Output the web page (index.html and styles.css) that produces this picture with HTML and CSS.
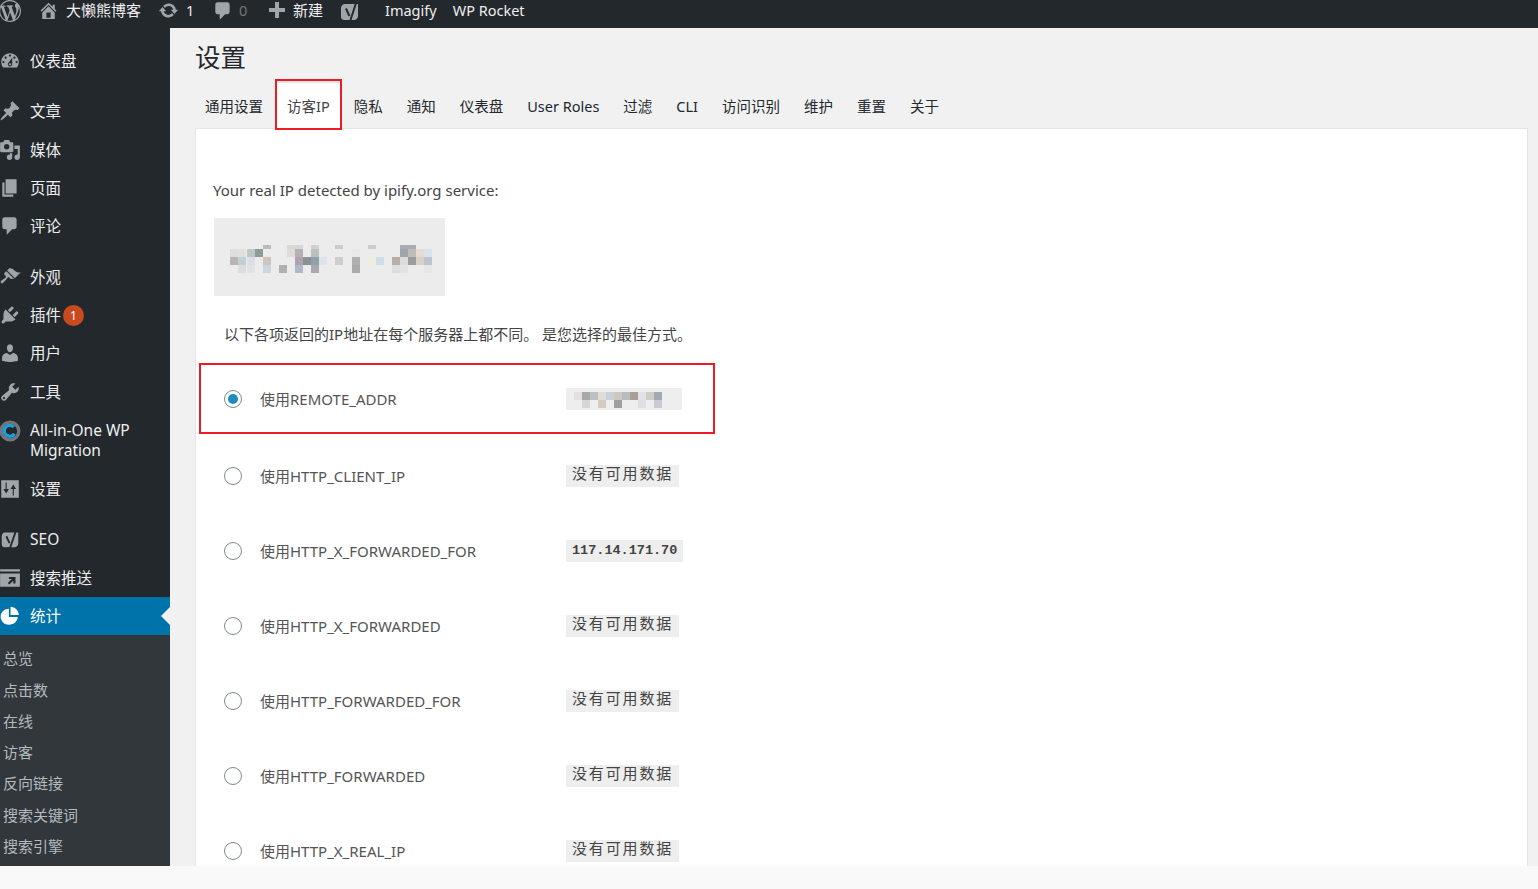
FILE: index.html
```html
<!DOCTYPE html>
<html lang="zh-CN">
<head>
<meta charset="utf-8">
<title>设置</title>
<link rel="stylesheet" href="styles.css">
</head>
<body>
<header class="adminbar">
  <svg class="bar-wp" viewBox="0 0 20 20"><path d="M20 10c0-5.51-4.49-10-10-10C4.48 0 0 4.49 0 10c0 5.52 4.48 10 10 10 5.51 0 10-4.48 10-10zM7.78 15.37L4.37 6.22c.55-.02 1.17-.08 1.17-.08.5-.06.44-1.13-.06-1.11 0 0-1.45.11-2.37.11-.18 0-.37 0-.58-.01C4.12 2.69 6.87 1.11 10 1.11c2.33 0 4.45.87 6.05 2.34-.68-.11-1.65.39-1.65 1.58 0 .74.45 1.36.9 2.1.35.61.55 1.36.55 2.46 0 1.49-1.4 5-1.4 5l-3.03-8.37c.54-.02.82-.17.82-.17.5-.05.44-1.25-.06-1.22 0 0-1.44.12-2.38.12-.87 0-2.33-.12-2.33-.12-.5-.03-.56 1.2-.06 1.22l.92.08 1.26 3.41zM17.41 10c.24-.64.74-1.87.43-4.25.7 1.29 1.05 2.71 1.05 4.25 0 3.29-1.73 6.24-4.4 7.78.97-2.59 1.94-5.2 2.92-7.78zM6.1 18.09C3.12 16.65 1.11 13.53 1.11 10c0-1.3.23-2.48.72-3.59C3.25 10.3 4.67 14.2 6.1 18.09zm4.03-6.63l2.58 6.98c-.86.29-1.76.45-2.71.45-.79 0-1.57-.11-2.29-.33.81-2.38 1.62-4.74 2.42-7.1z"/></svg>
  <svg class="bar-home" viewBox="0 0 20 20"><path d="M16 8.5l1.53 1.53-1.06 1.06L10 4.62l-6.47 6.47-1.06-1.06L10 2.5l4 4v-2h2v4zm-6-2.46l6 5.99V18H4v-5.97zM12 17v-5H8v5h4z"/></svg>
  <span class="bar-site">大懒熊博客</span>
  <svg class="bar-update" viewBox="0 0 20 20"><path d="M10.2 3.28c3.53 0 6.43 2.61 6.92 6h2.08l-3.5 4-3.5-4h2.32c-.45-1.97-2.21-3.45-4.32-3.45-1.45 0-2.73.71-3.54 1.78L4.95 5.66C6.23 4.2 8.11 3.28 10.2 3.28zm-.4 13.44c-3.52 0-6.43-2.61-6.92-6H.8l3.5-4c1.17 1.33 2.33 2.67 3.5 4H5.48c.45 1.97 2.21 3.45 4.32 3.45 1.45 0 2.73-.71 3.54-1.78l1.71 1.95c-1.28 1.46-3.15 2.38-5.25 2.38z"/></svg>
  <span class="bar-count">1</span>
  <svg class="bar-comment" viewBox="0 0 20 20"><path d="M5 2h9c1.1 0 2 .9 2 2v7c0 1.1-.9 2-2 2h-2l-5 5v-5H5c-1.1 0-2-.9-2-2V4c0-1.1.9-2 2-2z"/></svg>
  <span class="bar-zero">0</span>
  <svg class="bar-plus" viewBox="0 0 18 18"><path d="M7 1h4v6h6v4h-6v6H7v-6H1V7h6z"/></svg>
  <span class="bar-new">新建</span>
  <svg class="bar-yoast" viewBox="0 0 20 24"><path d="M4 4h13v12c0 2.2-1.8 4-4 4H3c-1.6 0-3-1.4-3-3V8c0-2.2 1.8-4 4-4z"/><path class="yoast-cut" d="M5 8.5l3.4 7.5M15.5 1.5L9 21.5h-3"/></svg>
  <span class="bar-imagify">Imagify</span>
  <span class="bar-rocket">WP Rocket</span>
</header>

<div class="layout">
  <nav class="sidebar">
    <a class="item"><svg class="ico" viewBox="0 0 20 20"><path d="M3.76 16h12.48c1.1-1.37 1.76-3.11 1.76-5 0-4.42-3.58-8-8-8s-8 3.58-8 8c0 1.89.66 3.63 1.76 5zM10 4c.55 0 1 .45 1 1s-.45 1-1 1-1-.45-1-1 .45-1 1-1zM6 6c.55 0 1 .45 1 1s-.45 1-1 1-1-.45-1-1 .45-1 1-1zm8 0c.55 0 1 .45 1 1s-.45 1-1 1-1-.45-1-1 .45-1 1-1zm-5.37 5.55L12 7v6c0 1.1-.9 2-2 2s-2-.9-2-2c0-.57.24-1.08.63-1.45zM4 10c.55 0 1 .45 1 1s-.45 1-1 1-1-.45-1-1 .45-1 1-1zm12 0c.55 0 1 .45 1 1s-.45 1-1 1-1-.45-1-1 .45-1 1-1zm-5 3c0-.55-.45-1-1-1s-1 .45-1 1 .45 1 1 1 1-.45 1-1z"/></svg><span>仪表盘</span></a>
    <a class="item sep"><svg class="ico" viewBox="0 0 20 20"><path d="M10.44 3.02l1.82-1.82 6.36 6.35-1.83 1.82c-1.05-.68-2.48-.57-3.41.36l-.75.75c-.92.93-1.04 2.35-.35 3.41l-1.83 1.82-2.41-2.41-2.8 2.79c-.42.42-3.38 2.71-3.8 2.29s1.86-3.39 2.28-3.81l2.79-2.79L4.1 9.36l1.83-1.82c1.05.69 2.48.57 3.4-.36l.75-.75c.93-.92 1.05-2.35.36-3.41z"/></svg><span>文章</span></a>
    <a class="item"><svg class="ico" viewBox="0 0 20 20"><path d="M13 11V4c0-.55-.45-1-1-1h-1.67L9 1H5L3.67 3H2c-.55 0-1 .45-1 1v7c0 .55.45 1 1 1h10c.55 0 1-.45 1-1zM7 4.5c1.38 0 2.5 1.12 2.5 2.5S8.38 9.5 7 9.5 4.5 8.38 4.5 7 5.62 4.5 7 4.5zM14 6h5v10.5c0 1.38-1.12 2.5-2.5 2.5S14 17.88 14 16.5s1.12-2.5 2.5-2.5c.17 0 .34.02.5.05V9h-3V6zm-4 8.05V13h2v3.5c0 1.38-1.12 2.5-2.5 2.5S7 17.88 7 16.5 8.12 14 9.5 14c.17 0 .34.02.5.05z"/></svg><span>媒体</span></a>
    <a class="item"><svg class="ico" viewBox="0 0 20 20"><path d="M6 15V2h10v13H6zm-1 1h8v2H3V5h2v11z"/></svg><span>页面</span></a>
    <a class="item"><svg class="ico" viewBox="0 0 20 20"><path d="M5 2h9c1.1 0 2 .9 2 2v7c0 1.1-.9 2-2 2h-2l-5 5v-5H5c-1.1 0-2-.9-2-2V4c0-1.1.9-2 2-2z"/></svg><span>评论</span></a>
    <a class="item sep"><svg class="ico" viewBox="0 0 20 20"><path d="M14.48 11.06L7.41 3.99l1.5-1.5c.5-.56 2.3-.47 3.51.32 1.21.8 1.43 1.28 2.91 2.1 1.18.64 2.45 1.26 4.45.85zm-.71.71L6.7 4.7 4.93 6.47c-.39.39-.39 1.02 0 1.41l1.06 1.06c.39.39.39 1.03 0 1.42-.6.6-1.43 1.11-2.21 1.69-.35.26-.7.53-1.01.84C1.43 13.23.99 14.52 2 15.5s1.96-.4 3.41-1.79c.31-.31.58-.65.84-1.01.58-.78 1.09-1.61 1.69-2.21.39-.39 1.02-.39 1.41 0l1.06 1.06c.39.39 1.02.39 1.41 0z"/></svg><span>外观</span></a>
    <a class="item"><svg class="ico" viewBox="0 0 20 20"><path d="M13.11 4.36L9.87 7.6 8 5.73l3.24-3.24c.35-.34 1.05-.2 1.56.32.52.51.66 1.21.31 1.55zm-8 1.77l.91-1.12 9.01 9.01-1.19.84c-.71.71-2.63 1.16-3.82 1.16H6.14L4.9 17.26c-.59.59-1.54.59-2.12 0-.59-.58-.59-1.53 0-2.12l1.24-1.24v-3.88c0-1.13.4-3.19 1.09-3.89zm7.26 3.97l3.24-3.24c.34-.35 1.04-.21 1.55.31.52.51.66 1.21.31 1.55l-3.24 3.25z"/></svg><span>插件</span><b class="badge">1</b></a>
    <a class="item"><svg class="ico" viewBox="0 0 20 20"><path d="M10 9.25c-2.27 0-2.73-3.44-2.73-3.44C7 4.02 7.82 2 9.97 2c2.16 0 2.98 2.02 2.71 3.81 0 0-.41 3.44-2.68 3.44zm0 2.57L12.72 10c2.39 0 4.52 2.33 4.52 4.53v2.49s-3.65 1.13-7.24 1.13c-3.65 0-7.24-1.13-7.24-1.13v-2.49c0-2.25 1.94-4.48 4.47-4.48z"/></svg><span>用户</span></a>
    <a class="item"><svg class="ico" viewBox="0 0 20 20"><path d="M16.68 9.77c-1.34 1.34-3.3 1.67-4.95.99l-5.41 6.52c-.99.99-2.59.99-3.58 0s-.99-2.59 0-3.57l6.52-5.42c-.68-1.65-.35-3.61.99-4.95 1.28-1.28 3.12-1.62 4.72-1.06l-2.89 2.89 2.82 2.82 2.86-2.87c.53 1.58.18 3.39-1.08 4.65zM3.81 16.21c.4.39 1.04.39 1.43 0 .4-.4.4-1.04 0-1.43-.39-.4-1.03-.4-1.43 0-.39.39-.39 1.03 0 1.43z"/></svg><span>工具</span></a>
    <a class="item tall"><svg class="ico ico-aio" viewBox="0 0 20 20"><circle class="aio-grey" cx="10" cy="10" r="8"/><path class="aio-blue" d="M13.5 6.5a5 5 0 1 0 .5 6"/></svg><span>All-in-One WP Migration</span></a>
    <a class="item"><svg class="ico" viewBox="0 0 20 20"><path d="M2 2h16v16H2zm4 2v6H4l2.5 4L9 10H7V4zm6.500 12h1v-6h2l-2.500-4-2.500 4h2z" fill-rule="evenodd"/></svg><span>设置</span></a>
    <a class="item sep"><svg class="ico" viewBox="0 0 20 24"><path d="M4 5h15v12c0 2.200-1.800 4-4 4H4c-1.600 0-3-1.400-3-3V9c0-2.200 1.800-4 3-4z"/><path class="yoast-cut2" d="M6 9l3.500 7.500M17 1.500L10 22H6.500"/></svg><span>SEO</span></a>
    <a class="item"><svg class="ico" viewBox="0 0 20 20"><path d="M1 2h18v2H1zM1 6h18v12H1zm8 3v2h2.600L8 14.600 9.400 16l3.600-3.600V15h2V9z" fill-rule="evenodd"/></svg><span>搜索推送</span></a>
    <a class="item current"><svg class="ico" viewBox="0 0 20 20"><path d="M10.500 1.500c4.100 0 7.500 3.400 7.500 7.500h-7.500zM9 3.500V11h8c0 4-3.500 7-8 7-4.100 0-7.500-3.300-7.500-7.300S4.900 3.500 9 3.500z"/></svg><span>统计</span></a>
    <ul class="submenu">
      <li>总览</li>
      <li>点击数</li>
      <li>在线</li>
      <li>访客</li>
      <li>反向链接</li>
      <li>搜索关键词</li>
      <li>搜索引擎</li>
    </ul>
  </nav>

  <main class="content">
    <h1 class="title">设置</h1>
    <div class="tabs">
      <a class="tab">通用设置</a>
      <a class="tab active">访客IP</a>
      <a class="tab">隐私</a>
      <a class="tab">通知</a>
      <a class="tab">仪表盘</a>
      <a class="tab">User Roles</a>
      <a class="tab">过滤</a>
      <a class="tab">CLI</a>
      <a class="tab">访问识别</a>
      <a class="tab">维护</a>
      <a class="tab">重置</a>
      <a class="tab">关于</a>
    </div>
    <section class="card">
      <p class="detected">Your real IP detected by ipify.org service:</p>
      <svg class="ip-image" viewBox="0 0 231 78">
        <rect width="231" height="78" fill="#ececec"/>
        <g>
          <rect x="49" y="27" width="8" height="4" fill="#bbbbbb"/><rect x="73" y="27" width="16" height="4" fill="#dcd7d7"/><rect x="97" y="27" width="8" height="4" fill="#d5d0d0"/><rect x="121" y="27" width="8" height="4" fill="#cccccc"/><rect x="154" y="27" width="8" height="4" fill="#cccccc"/><rect x="186" y="27" width="16" height="4" fill="#a9adb3"/>
          <rect x="16" y="31" width="8" height="8" fill="#dddddd"/><rect x="24" y="31" width="8" height="8" fill="#e3dfdc"/><rect x="33" y="31" width="8" height="8" fill="#bcc8c8"/><rect x="41" y="31" width="8" height="8" fill="#8f9a9a"/><rect x="73" y="31" width="8" height="8" fill="#e0dada"/><rect x="81" y="31" width="8" height="8" fill="#b5b0b8"/><rect x="97" y="31" width="8" height="8" fill="#b8c0c0"/><rect x="138" y="31" width="8" height="8" fill="#e8e8e4"/><rect x="186" y="31" width="8" height="8" fill="#a0a5ab"/><rect x="194" y="31" width="8" height="8" fill="#c0bdb8"/><rect x="202" y="31" width="8" height="8" fill="#e4dcd0"/><rect x="210" y="31" width="8" height="8" fill="#d8e2ea"/>
          <rect x="16" y="39" width="8" height="8" fill="#b8b4b8"/><rect x="24" y="39" width="8" height="8" fill="#c0d0d4"/><rect x="33" y="39" width="8" height="8" fill="#dddee4"/><rect x="49" y="39" width="8" height="8" fill="#cfc5bd"/><rect x="81" y="39" width="8" height="8" fill="#aca5b0"/><rect x="89" y="39" width="8" height="8" fill="#8d9090"/><rect x="97" y="39" width="8" height="8" fill="#8fa0a8"/><rect x="105" y="39" width="8" height="8" fill="#dde3e8"/><rect x="121" y="39" width="8" height="8" fill="#d0ccd0"/><rect x="138" y="39" width="8" height="8" fill="#b0b0b0"/><rect x="154" y="39" width="8" height="8" fill="#eeeedf"/><rect x="162" y="39" width="8" height="8" fill="#cfdde8"/><rect x="178" y="39" width="8" height="8" fill="#b8b0a8"/><rect x="186" y="39" width="8" height="8" fill="#dcdcdc"/><rect x="194" y="39" width="8" height="8" fill="#9c9ca0"/><rect x="202" y="39" width="8" height="8" fill="#d8d0c4"/><rect x="210" y="39" width="8" height="8" fill="#bcc4cc"/>
          <rect x="24" y="47" width="8" height="8" fill="#dddddd"/><rect x="33" y="47" width="8" height="8" fill="#dfe3e3"/><rect x="49" y="47" width="8" height="8" fill="#cbd8e0"/><rect x="65" y="47" width="8" height="8" fill="#b0b0b0"/><rect x="81" y="47" width="8" height="8" fill="#b0b8cc"/><rect x="97" y="47" width="8" height="8" fill="#a8a8b0"/><rect x="138" y="47" width="8" height="8" fill="#aaaaaa"/><rect x="178" y="47" width="8" height="8" fill="#dddddd"/><rect x="186" y="47" width="8" height="8" fill="#e3e3e3"/><rect x="210" y="47" width="8" height="8" fill="#e6e6e6"/>
        </g>
      </svg>
      <p class="note">以下各项返回的IP地址在每个服务器上都不同。 是您选择的最佳方式。</p>
      <div class="options">
        <label class="option marked">
          <input type="radio" name="ip" class="radio" checked>
          <span class="name">使用REMOTE_ADDR</span>
          <svg class="ip-blur" viewBox="0 0 116 22">
            <rect width="116" height="22" fill="#eeeeee"/>
            <rect x="8" y="4" width="8" height="8" fill="#e4e0e0"/><rect x="16" y="4" width="8" height="8" fill="#a8a8ac"/><rect x="24" y="4" width="8" height="8" fill="#bcc0c0"/><rect x="32" y="4" width="8" height="8" fill="#e0ddd8"/><rect x="40" y="4" width="8" height="8" fill="#c8d0d8"/><rect x="48" y="4" width="8" height="8" fill="#cfc8c0"/><rect x="56" y="4" width="8" height="8" fill="#b8bcbc"/><rect x="64" y="4" width="8" height="8" fill="#a8a098"/><rect x="72" y="4" width="8" height="8" fill="#dfe3e8"/><rect x="80" y="4" width="8" height="8" fill="#cfcdc8"/><rect x="88" y="4" width="8" height="8" fill="#a4a8b0"/>
            <rect x="16" y="12" width="8" height="8" fill="#d8d4d8"/><rect x="32" y="12" width="8" height="8" fill="#d4ccc0"/><rect x="48" y="12" width="8" height="8" fill="#a0a0a0"/><rect x="72" y="12" width="8" height="8" fill="#dcdfe3"/><rect x="88" y="12" width="8" height="8" fill="#c8ccd0"/>
          </svg>
        </label>
        <label class="option"><input type="radio" name="ip" class="radio"><span class="name">使用HTTP_CLIENT_IP</span><code class="val">没有可用数据</code></label>
        <label class="option"><input type="radio" name="ip" class="radio"><span class="name">使用HTTP_X_FORWARDED_FOR</span><code class="val ip">117.14.171.70</code></label>
        <label class="option"><input type="radio" name="ip" class="radio"><span class="name">使用HTTP_X_FORWARDED</span><code class="val">没有可用数据</code></label>
        <label class="option"><input type="radio" name="ip" class="radio"><span class="name">使用HTTP_FORWARDED_FOR</span><code class="val">没有可用数据</code></label>
        <label class="option"><input type="radio" name="ip" class="radio"><span class="name">使用HTTP_FORWARDED</span><code class="val">没有可用数据</code></label>
        <label class="option"><input type="radio" name="ip" class="radio"><span class="name">使用HTTP_X_REAL_IP</span><code class="val">没有可用数据</code></label>
      </div>
    </section>
  </main>
</div>
<footer class="strip"></footer>
</body>
</html>
```
FILE: styles.css
```css
* { box-sizing: border-box; }
html, body { margin: 0; height: 100%; }
body {
  display: flex;
  flex-direction: column;
  height: 889px;
  overflow: hidden;
  background: #f9f9f9;
  color: #444;
  font-family: "Noto Sans", "Noto Sans CJK SC", sans-serif;
  font-size: 15px;
}

/* admin bar */
.adminbar {
  flex: 0 0 28px;
  height: 28px;
  background: #23282d;
  color: #eee;
  display: flex;
  align-items: flex-start;
  font-size: 14.5px;
  line-height: 20px;
  overflow: hidden;
}
.adminbar svg { fill: #a0a5aa; flex: none; }
.bar-wp { width: 22px; height: 22px; margin: 0 0 0 -1px; }
.bar-home { width: 21px; height: 21px; margin: 0 0 0 17px; }
.bar-site { margin-left: 7px; width: 75px; font-size: 15px; white-space: nowrap; }
.bar-update { width: 21px; height: 21px; margin-left: 17px; }
.bar-count { margin-left: 7px; width: 8px; }
.bar-comment { width: 22px; height: 22px; margin-left: 18px; }
.bar-zero { margin-left: 5px; width: 10px; color: #72777c; }
.bar-plus { width: 18px; height: 18px; margin: 1px 0 0 19px; }
.bar-new { margin-left: 7px; width: 30px; font-size: 15px; }
.bar-yoast { width: 20px; height: 24px; margin-left: 18px; }
.yoast-cut { fill: none; stroke: #23282d; stroke-width: 2; }
.bar-imagify { margin-left: 24px; white-space: nowrap; }
.bar-rocket { margin-left: 16px; white-space: nowrap; }

/* layout */
.layout { flex: 0 0 838px; height: 838px; display: flex; overflow: hidden; background: #f1f1f1; }

/* sidebar */
.sidebar {
  flex: 0 0 170px;
  width: 170px;
  background: #23282d;
  padding-top: 14px;
  color: #eee;
  font-size: 15.5px;
  overflow: hidden;
}
.item {
  display: flex;
  align-items: center;
  height: 38.33px;
  position: relative;
  line-height: 20px;
}
.item > span:first-of-type { margin-left: 30px; }
.item.sep { margin-top: 12px; }
.item.tall { height: 59px; align-items: center; }
.tall > span { width: 125px; }
.ico {
  position: absolute;
  left: -1px;
  top: 50%;
  margin-top: -11px;
  width: 22px;
  height: 22px;
  fill: #a0a5aa;
}
.tall .ico { margin-top: -20px; }
.aio-grey { fill: none; stroke: #72777c; stroke-width: 3; }
.aio-blue { fill: none; stroke: #1e9fd8; stroke-width: 3; }
.yoast-cut2 { fill: none; stroke: #23282d; stroke-width: 2; }
.badge {
  width: 21px;
  height: 21px;
  border-radius: 50%;
  background: #ca4a1f;
  color: #fff;
  font-size: 12px;
  font-weight: 400;
  text-align: center;
  line-height: 21px;
  margin-left: 2px;
}
.current { background: #0073aa; color: #fff; }
.current .ico { fill: #fff; }
.current::after {
  content: "";
  position: absolute;
  right: 0;
  top: 50%;
  margin-top: -9px;
  border: 9px solid transparent;
  border-right-color: #f1f1f1;
  border-left-width: 0;
}
.submenu {
  list-style: none;
  margin: 0;
  padding: 8px 0 0 3px;
  background: #32373c;
  color: #b4b9be;
  font-size: 15px;
  height: 240px;
}
.submenu li { height: 31.25px; line-height: 30px; }

/* content */
.content { flex: 1; min-width: 0; padding: 0 10px 0 25px; overflow: hidden; }
.title {
  margin: 0;
  height: 53px;
  font-size: 25.5px;
  font-weight: 400;
  line-height: 58px;
  color: #23282d;
}
.tabs { display: flex; height: 47px; padding-left: 0; font-size: 14.5px; color: #23282d; }
.tab { padding: 0 10px; line-height: 51px; margin-right: 4px; white-space: nowrap; }
.tab.active {
  background: #fff;
  border-top: 2px solid #e5e5e5;
  outline: 2px solid #ed1c24;
  outline-offset: 0;
  color: #444;
  line-height: 47px;
}
.card { background: #fff; border: 1px solid #e5e5e5; border-bottom: 0; height: 760px; padding: 0 17px; }
.detected { margin: 0; padding-top: 49px; line-height: 24px; color: #444; }
.ip-image { display: block; width: 231px; height: 78px; margin: 16px 0 0 1px; }
.note { margin: 26px 0 0 11px; line-height: 24px; }
.options { margin: 17px 0 0 -14px; width: 516px; }
.option { display: flex; align-items: center; height: 75px; padding-left: 25px; position: relative; color: #555; }
.option.marked { height: 71px; margin-bottom: 4px; outline: 2px solid #ed1c24; outline-offset: -2px; padding-top: 0; }
.radio {
  appearance: none;
  flex: none;
  width: 18px;
  height: 18px;
  margin: 0 18px 0 0;
  border: 1px solid #7e8993;
  border-radius: 50%;
  background: #fff;
  display: grid;
  place-items: center;
}
.radio:checked::before { content: ""; width: 10px; height: 10px; border-radius: 50%; background: #1e8cbe; }
.name { width: 306px; flex: none; white-space: nowrap; }
.ip-blur { width: 116px; height: 22px; flex: none; display: block; }
.val {
  flex: none;
  height: 22px;
  padding: 0 6px;
  background: #eee;
  color: #444;
  font-family: "Liberation Mono", "Noto Sans CJK SC", monospace;
  font-size: 15px;
  letter-spacing: 1.85px;
  line-height: 22px;
  white-space: nowrap;
}
.val.ip { font-size: 13.5px; font-weight: 700; letter-spacing: 0; }

/* bottom strip */
.strip { flex: 0 0 23px; background: #f9f9f9; }
```
